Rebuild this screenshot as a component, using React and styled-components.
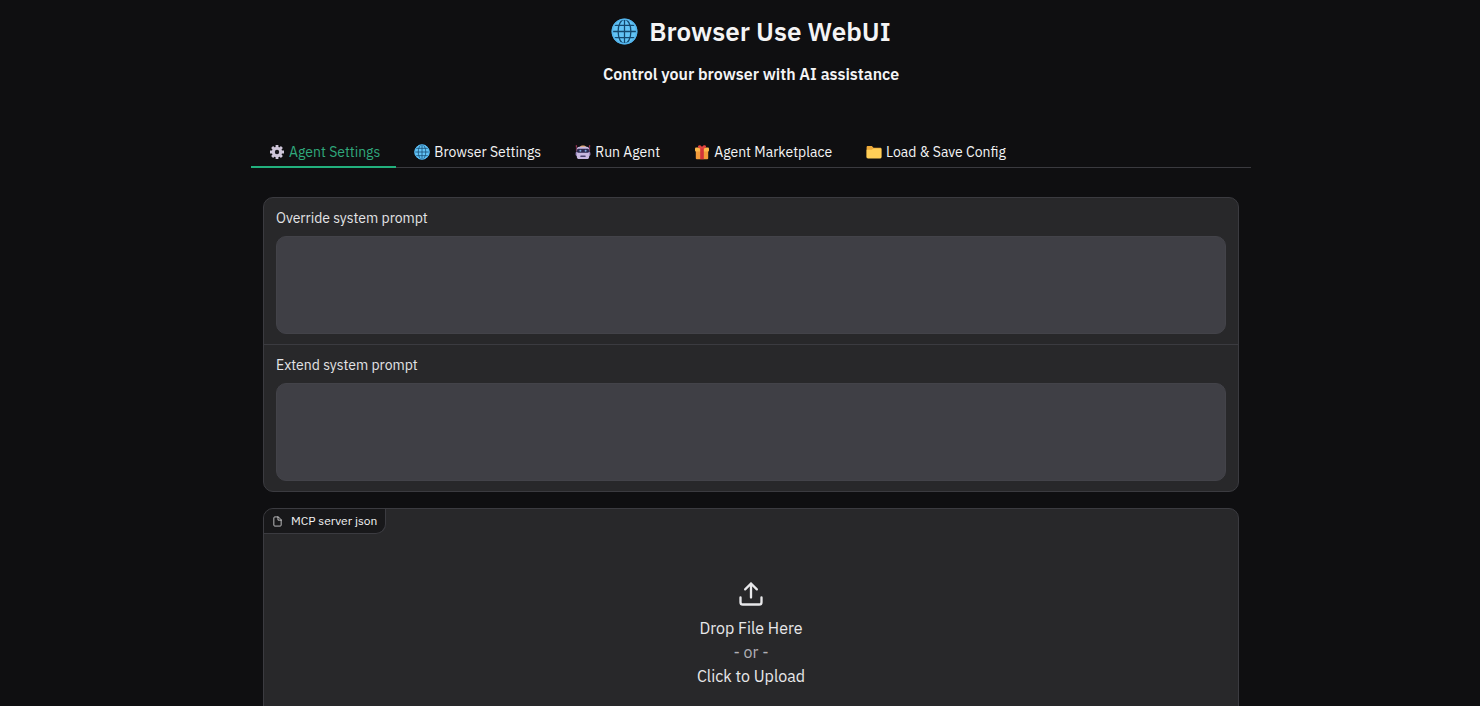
import React, { useState } from 'react'
import styled, { createGlobalStyle } from 'styled-components'

const GlobalStyle = createGlobalStyle`
    *, *::before, *::after{
        box-sizing: border-box;
    }
    html{
        scrollbar-width: none;
    }
    body{
        margin: 0;
        padding-left: 22px;
        background-color: #0f0f11;
        color: #f4f4f5;
        font-family: 'IBM Plex Sans', 'Noto Sans', sans-serif;
        font-size: 14px;
        line-height: 20px;
    }
    button, textarea{
        font: inherit;
        color: inherit;
    }
`

const GlobeIcon = () => (
    <svg viewBox='0 0 28 28' aria-hidden='true'>
        <circle cx='14' cy='14' r='13.3' fill='#62c3f5' />
        <g fill='none' stroke='#14486e' strokeWidth='1.3'>
            <ellipse cx='14' cy='14' rx='6.6' ry='12.6' />
            <path d='M14 1v26M1 14h26M3.2 7.6h21.6M3.2 20.4h21.6' />
        </g>
        <circle cx='14' cy='14' r='12.6' fill='none' stroke='#53b4ec' strokeWidth='1.6' />
    </svg>
)

const GearIcon = () => (
    <svg viewBox='0 0 16 16' aria-hidden='true'>
        <g stroke='#cfc6da' strokeWidth='2.8'>
            <path d='M8 1v14M1 8h14M3.1 3.1l9.8 9.8M12.9 3.1l-9.8 9.8' />
        </g>
        <circle cx='8' cy='8' r='5.2' fill='#cfc6da' />
        <circle cx='8' cy='8' r='2.2' fill='#17151b' />
    </svg>
)

const RobotIcon = () => (
    <svg viewBox='0 0 16 16' aria-hidden='true'>
        <path d='M1.4 2.2v5M14.6 2.2v5' stroke='#7b2f55' strokeWidth='.9' />
        <circle cx='1.4' cy='2' r='.8' fill='#b93a5e' />
        <circle cx='14.6' cy='2' r='.8' fill='#b93a5e' />
        <path d='M4.6 3.4C5 .8 11 .8 11.4 3.4z' fill='#e0a76d' />
        <rect x='.6' y='7.4' width='14.8' height='4.6' rx='1.6' fill='#9480bb' />
        <rect x='1.8' y='2.8' width='12.4' height='12.2' rx='2.6' fill='#c8b9e0' />
        <rect x='2' y='4.8' width='12' height='4' rx='1.4' fill='#2c2a50' />
        <circle cx='5.4' cy='6.8' r='1' fill='#7fa9dc' />
        <circle cx='10.6' cy='6.8' r='1' fill='#7fa9dc' />
        <rect x='5.2' y='11.4' width='5.6' height='1.6' rx='.8' fill='#4a426e' />
    </svg>
)

const GiftIcon = () => (
    <svg viewBox='0 0 16 16' aria-hidden='true'>
        <rect x='1.8' y='6' width='12.4' height='9.2' rx='1' fill='#f39b3a' />
        <rect x='1' y='3.4' width='14' height='4' rx='1' fill='#fcb84a' />
        <rect x='6.2' y='3.4' width='3.6' height='11.8' fill='#d23439' />
        <path d='M8 4.6C5.8 4.8 3.6 4 4 2.2 4.4.8 7 .8 8 3 9 .8 11.6.8 12 2.2 12.4 4 10.2 4.8 8 4.6z' fill='#e2443f' />
    </svg>
)

const FolderIcon = () => (
    <svg viewBox='0 0 16 16' aria-hidden='true'>
        <path d='M.6 3.2c0-.8.5-1.3 1.3-1.3h4l1.6 1.8h6.6c.8 0 1.3.5 1.3 1.3v8.2H.6z' fill='#eda93a' />
        <path d='M.6 5.8h5.2l1.8-1.4h7.8v8.8c0 .8-.5 1.2-1.2 1.2H1.8c-.7 0-1.2-.4-1.2-1.2z' fill='#ffcf57' />
    </svg>
)

const FileIcon = () => (
    <svg viewBox='0 0 24 24' fill='none' stroke='currentColor' strokeWidth='1.6' strokeLinecap='round' strokeLinejoin='round' aria-hidden='true'>
        <path d='M13 2H6a2 2 0 0 0-2 2v16a2 2 0 0 0 2 2h12a2 2 0 0 0 2-2V9z' />
        <path d='M13 2v7h7' />
    </svg>
)

const UploadIcon = () => (
    <svg viewBox='0 0 24 24' fill='none' stroke='currentColor' strokeWidth='2' strokeLinecap='round' strokeLinejoin='round' aria-hidden='true'>
        <path d='M21 15v4a2 2 0 0 1-2 2H5a2 2 0 0 1-2-2v-4' />
        <path d='M17 8l-5-5-5 5M12 3v12' />
    </svg>
)

const Page = styled.main`
    width: 70vw;
    margin: 0 auto;
    padding: 12px 18px 0;
`

const Header = styled.header`
    display: flex;
    flex-direction: column;
    align-items: center;
    gap: 12px;
    margin-bottom: 52px;
`

const Title = styled.h1`
    display: flex;
    align-items: center;
    gap: 11px;
    margin: 0;
    font-size: 26px;
    font-weight: 600;
    line-height: 38px;
`

const Subtitle = styled.h3`
    margin: 0;
    font-size: 16px;
    font-weight: 600;
    line-height: 24px;
`

const Icon = styled.span`
    display: flex;
    flex: none;
    width: ${({ $size }) => $size}px;
    height: ${({ $size }) => $size}px;
    & svg{
        width: 100%;
        height: 100%;
    }
`

const TabBar = styled.div`
    display: flex;
    border-bottom: 1px solid #3a3a3f;
`

const Tab = styled.button`
    display: flex;
    align-items: center;
    gap: 4px;
    height: 30px;
    margin-bottom: -1px;
    padding: 0 16px 0 18px;
    border: 0;
    border-bottom: 2px solid ${({ $active }) => $active ? '#22b07d' : 'transparent'};
    background: none;
    color: ${({ $active }) => $active ? '#2fa97c' : '#f4f4f5'};
    white-space: nowrap;
    cursor: pointer;
`

const Panels = styled.div`
    display: flex;
    flex-direction: column;
    gap: 16px;
    padding: 29px 12px 0;
`

const Block = styled.section`
    border: 1px solid #3b3b40;
    border-radius: 10px;
    background-color: #28282a;
    overflow: hidden;
`

const Field = styled.label`
    display: flex;
    flex-direction: column;
    gap: 8px;
    padding: 10px 12px;
    color: #e4e4e7;
    & + &{
        border-top: 1px solid #3b3b40;
    }
`

const TextArea = styled.textarea`
    display: block;
    width: 100%;
    height: 98px;
    padding: 10px;
    border: 1px solid #434349;
    border-radius: 10px;
    background-color: #3f3f45;
    resize: none;
    outline: none;
`

const BlockLabel = styled.div`
    display: flex;
    align-items: center;
    gap: 8px;
    width: fit-content;
    height: 25px;
    padding: 0 8px;
    border: solid #3b3b40;
    border-width: 0 1px 1px 0;
    border-bottom-right-radius: 10px;
    background-color: #18181a;
    font-size: 12px;
`

const DropZone = styled.button`
    display: flex;
    flex-direction: column;
    align-items: center;
    width: 100%;
    padding: 46px 12px 60px;
    border: 0;
    background: none;
    color: #e8e8ea;
    font-size: 16px;
    line-height: 24px;
    cursor: pointer;
    & ${Icon}{
        margin-bottom: 8px;
    }
`

const Muted = styled.span`
    color: #b0b0b6;
`

const tabs = [
    { name: 'Agent Settings', icon: <GearIcon /> },
    { name: 'Browser Settings', icon: <GlobeIcon /> },
    { name: 'Run Agent', icon: <RobotIcon /> },
    { name: 'Agent Marketplace', icon: <GiftIcon /> },
    { name: 'Load & Save Config', icon: <FolderIcon /> }
]

const PromptField = ({ label, name, data, onChange }) => (
    <Field>
        {label}
        <TextArea name={name} value={data[name]} onChange={onChange} />
    </Field>
)

const App = () => {
    const [activeTab, setActiveTab] = useState('Agent Settings')
    const [formData, updateFormData] = useState({ override: '', extend: '' })

    const handleFieldChange = ({ target }) =>
        updateFormData({ ...formData, [target.name]: target.value })

    return (
        <>
            <GlobalStyle />
            <Page>
                <Header>
                    <Title>
                        <Icon $size={27}><GlobeIcon /></Icon>
                        Browser Use WebUI
                    </Title>
                    <Subtitle>Control your browser with AI assistance</Subtitle>
                </Header>
                <TabBar role='tablist'>
                    {tabs.map(({ name, icon }) => (
                        <Tab
                            key={name}
                            role='tab'
                            aria-selected={name === activeTab}
                            $active={name === activeTab}
                            onClick={() => setActiveTab(name)}
                        >
                            <Icon $size={16}>{icon}</Icon>
                            {name}
                        </Tab>
                    ))}
                </TabBar>
                <Panels>
                    <Block>
                        <PromptField label='Override system prompt' name='override' data={formData} onChange={handleFieldChange} />
                        <PromptField label='Extend system prompt' name='extend' data={formData} onChange={handleFieldChange} />
                    </Block>
                    <Block>
                        <BlockLabel>
                            <Icon $size={11}><FileIcon /></Icon>
                            MCP server json
                        </BlockLabel>
                        <DropZone>
                            <Icon $size={28}><UploadIcon /></Icon>
                            <span>Drop File Here</span>
                            <Muted>- or -</Muted>
                            <span>Click to Upload</span>
                        </DropZone>
                    </Block>
                </Panels>
            </Page>
        </>
    )
}

export default App
